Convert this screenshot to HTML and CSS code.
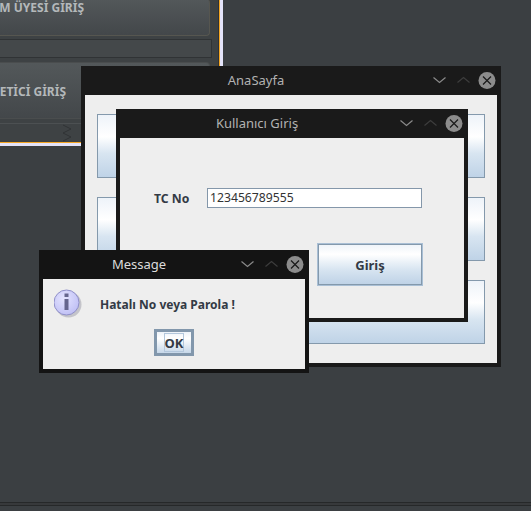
FILE: index.html
```html
<!DOCTYPE html>
<html lang="tr">
<head>
<meta charset="utf-8">
<title>AnaSayfa</title>
<link rel="stylesheet" href="styles.css">
</head>
<body>
<svg class="defs" width="0" height="0" aria-hidden="true">
  <symbol id="controls" viewBox="0 0 70 29">
    <path class="c-down" d="M6.500 11.500l6 5 6-5"/>
    <path class="c-up" d="M30.500 16.500l6-5 6 5"/>
    <circle class="c-circle" cx="60" cy="14.500" r="8.500"/>
    <path class="c-x" d="M56 10.500l8 8M64 10.500l-8 8"/>
  </symbol>
</svg>
<div class="desktop">
  <div class="frame">
    <aside class="panel">
      <div class="side-btn side-btn-first">M ÜYESİ GİRİŞ</div>
      <div class="side-strip"></div>
      <div class="side-btn side-btn-second">ETİCİ GİRİŞ</div>
      <div class="side-grip">
        <svg width="12" height="18" viewBox="0 0 12 18"><path d="M2 1l8 4-8 4 8 4-8 4" fill="none" stroke="#303335" stroke-width="1"/></svg>
      </div>
    </aside>
  </div>
  <div class="statusbar"></div>

  <section class="window win-main">
    <header class="titlebar"><span class="title">AnaSayfa</span><svg class="controls"><use href="#controls"/></svg></header>
    <div class="main-body">
      <div class="big-btn"></div>
      <div class="big-btn"></div>
      <div class="big-btn"></div>
    </div>
  </section>

  <section class="window win-login">
    <header class="titlebar"><span class="title">Kullanıcı Giriş</span><svg class="controls"><use href="#controls"/></svg></header>
    <div class="login-body">
      <div class="field-row">
        <label class="field-label">TC No</label>
        <div class="field">123456789555</div>
      </div>
      <div class="login-btn">Giriş</div>
    </div>
  </section>

  <section class="window win-msg">
    <header class="titlebar"><span class="title">Message</span><svg class="controls"><use href="#controls"/></svg></header>
    <div class="msg-body">
      <div class="msg-row">
        <svg class="info" width="32" height="32" viewBox="0 0 32 32">
          <defs>
            <radialGradient id="infoFill" cx="40%" cy="35%" r="70%"><stop offset="0" stop-color="#e4e4ff"/><stop offset="1" stop-color="#bebef4"/></radialGradient>
          </defs>
          <circle cx="14.500" cy="15.500" r="13" fill="#5a5a70" opacity=".28"/>
          <circle cx="12.500" cy="13.500" r="12.500" fill="url(#infoFill)" stroke="#8f8fc8" stroke-width="1"/>
          <rect x="10.500" y="4.500" width="4" height="3.500" fill="#66668e"/>
          <rect x="10.500" y="10" width="4" height="11" fill="#66668e"/>
        </svg>
        <span class="msg-text">Hatalı No veya Parola !</span>
      </div>
      <div class="ok-btn"><span class="ok-focus">OK</span></div>
    </div>
  </section>
</div>
</body>
</html>
```
FILE: styles.css
```css
* { box-sizing: border-box; }
html, body { margin: 0; padding: 0; }
body { font-family: "Noto Sans", sans-serif; }
.defs { position: absolute; }

.desktop {
  position: relative;
  width: 531px;
  height: 511px;
  overflow: hidden;
  background: #3b3f42;
  display: flex;
  flex-direction: column;
}

.frame {
  width: 223px;
  height: 146px;
  flex: none;
  border-right: 3px solid #e4e4fa;
  border-bottom: 3px solid #e4e4fa;
}
.panel {
  height: 143px;
  border-right: 1px solid #f5a623;
  border-bottom: 1px solid #f5a623;
  background: #3e4244;
  padding: 0 8px 0 0;
  overflow: hidden;
  display: flex;
  flex-direction: column;
  justify-content: flex-end;
  box-shadow: inset -1px 0 0 #2f3234;
}
.side-btn {
  flex: none;
  width: 210px;
  height: 57px;
  display: flex;
  align-items: center;
  justify-content: flex-end;
  font-weight: 700;
  font-size: 12px;
  color: #b4b8ba;
  white-space: nowrap;
  background: linear-gradient(#53585a, #43474a);
  border: 1px solid #565650;
  border-left: 0;
  border-radius: 0 4px 4px 0;
}
.side-btn-first { height: 37px; padding: 0 125px 19px 0; border-top: 0; }
.side-btn-second { padding: 2px 143px 0 0; border-color: #4a4d4e; }
.side-strip {
  flex: none;
  width: 212px;
  height: 19px;
  margin: 3px 0 4px;
  background: #44484a;
  border: 1px solid #303335;
  border-left: 0;
}
.side-grip {
  flex: none;
  height: 19px;
  margin-top: 4px;
  border-top: 1px solid #4c5052;
  padding-left: 61px;
}
.side-grip svg { display: block; }

.statusbar {
  flex: none;
  margin-top: auto;
  height: 9px;
  border-top: 1px solid #262829;
  background: linear-gradient(#37393b 2px, #262829 2px, #262829 3px, #3b3f42 3px);
}

.window {
  position: absolute;
  background: #eeeeee;
  border: 4px solid #1a1a1a;
  border-top: 0;
  display: flex;
  flex-direction: column;
}
.win-main { left: 81px; top: 66px; width: 420px; height: 301px; }
.win-login { left: 116px; top: 109px; width: 352px; height: 213px; }
.win-msg { left: 39px; top: 250px; width: 270px; height: 123px; }

.titlebar {
  flex: none;
  height: 29px;
  background: #1a1a1a;
  display: flex;
  align-items: center;
  color: #b2b2b2;
  font-size: 13px;
}
.title { flex: 1; text-align: center; white-space: nowrap; padding-bottom: 2px; }
.controls { width: 70px; height: 29px; flex: none; display: block; }
.c-down, .c-up, .c-x { fill: none; stroke-width: 1.200; }
.c-down { stroke: #8a8a8a; }
.c-up { stroke: #3d3d3d; }
.c-circle { fill: #8c8c8c; }
.c-x { stroke: #1a1a1a; }
.win-msg .titlebar { color: #dcdcdc; background: #141414; }
.win-msg { border-color: #141414; }
.win-msg .c-down { stroke: #e0e0e0; }
.win-msg .c-up { stroke: #484848; }
.win-msg .c-circle { fill: #ececec; }

.main-body {
  flex: 1;
  padding: 19px 12px;
  display: flex;
  flex-direction: column;
  gap: 19px;
}
.big-btn {
  flex: 1;
  border: 1px solid #8499ac;
  background: linear-gradient(#eef3f9 0%, #ffffff 35%, #d8e5f1 62%, #bfd3e7 100%);
}

.login-body { flex: 1; padding: 50px 0 0 34px; display: flex; flex-direction: column; }
.field-row { display: flex; align-items: center; }
.field-label { width: 53px; font-size: 12.200px; font-weight: 700; color: #333a45; }
.field {
  width: 215px;
  height: 20px;
  background: #fff;
  border: 1px solid #8497aa;
  padding-left: 2px;
  font-size: 12.200px;
  line-height: 18px;
  color: #333;
}
.login-btn {
  width: 106px;
  height: 43px;
  margin: 35px 0 0 163px;
  border: 1px solid #a9bfd5;
  box-shadow: inset 0 0 0 1px #8499ac;
  background: linear-gradient(#eef3f9 0%, #ffffff 25%, #d8e5f1 62%, #bdd1e6 100%);
  display: flex;
  align-items: center;
  justify-content: center;
  font-size: 13px;
  font-weight: 700;
  color: #333a45;
}

.msg-body { flex: 1; display: flex; flex-direction: column; align-items: center; padding-top: 10px; }
.msg-row { align-self: stretch; display: flex; align-items: flex-start; padding-left: 11px; height: 40px; }
.info { flex: none; display: block; }
.msg-text { margin: 7px 0 0 14px; font-size: 12px; font-weight: 700; color: #333a45; white-space: nowrap; }
.ok-btn {
  width: 40px;
  height: 27px;
  border: 3px solid #8297ac;
  background: linear-gradient(#eef3f9, #fff 30%, #c6d7e9);
  display: flex;
  align-items: center;
  justify-content: center;
}
.ok-focus {
  width: 20px;
  height: 19px;
  border: 1px solid #b3c7dc;
  display: flex;
  align-items: center;
  justify-content: center;
  font-size: 13px;
  font-weight: 700;
  color: #333a45;
}
```
